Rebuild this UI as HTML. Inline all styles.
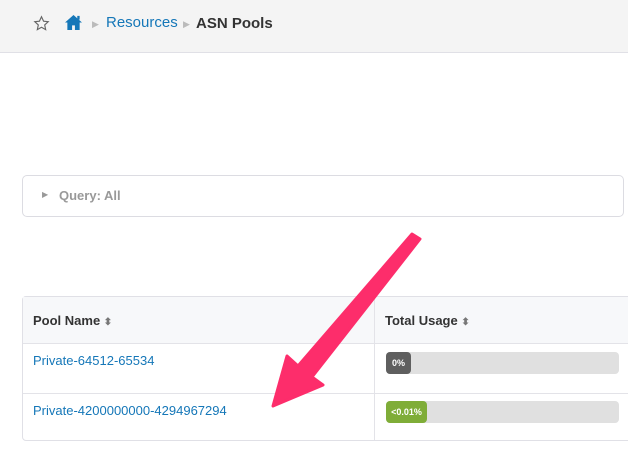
<!DOCTYPE html>
<html><head><style>
body{margin:0;width:628px;height:450px;background:#fff;font-family:"Liberation Sans",sans-serif;position:relative;overflow:hidden}
.hdr{position:absolute;left:0;top:0;width:628px;height:52px;background:#f4f4f4;border-bottom:1px solid #e0e0e6}
.bc{position:absolute;top:14px;font-size:15px}
.q{position:absolute;left:22px;top:175px;width:600px;height:40px;border:1px solid #dcdce2;border-radius:5px}
.tbl{position:absolute;left:22px;top:296px;width:620px;height:143px;border:1px solid #e0e0e6;border-radius:4px}
.th{position:absolute;top:0;height:46px;background:#f7f8fa;border-bottom:1px solid #e3e3e8;width:100%}
.cell{position:absolute;font-size:13px}
a{color:#1577b8;text-decoration:none}
.bar{position:absolute;left:363px;width:233px;height:22px;background:#e0e0e0;border-radius:4px}
.fill{position:absolute;left:0;top:0;height:22px;border-radius:4px;color:#fff;font-size:9px;font-weight:bold;line-height:22px;text-align:center}
</style></head><body>
<div class="hdr">
<svg style="position:absolute;left:33px;top:15px" width="17" height="17" viewBox="0 0 24 24"><path d="M12 2.5l2.9 6.2 6.6.7-5 4.6 1.4 6.6L12 17.3 6.1 20.6l1.4-6.6-5-4.6 6.6-.7z" fill="none" stroke="#666" stroke-width="1.6"/></svg>
<svg style="position:absolute;left:64px;top:14px" width="19" height="17" viewBox="0 0 20 18"><path d="M10 1L1 9h2.5v8h5v-5h3v5h5V9H19z" fill="#1577b8"/><rect x="14" y="2" width="2.5" height="4" fill="#1577b8"/></svg>
<span class="bc" style="left:92px;color:#bbb;font-size:9px;top:19px">▶</span>
<span class="bc" style="left:106px;color:#1577b8">Resources</span>
<span class="bc" style="left:183px;color:#bbb;font-size:9px;top:19px">▶</span>
<span class="bc" style="left:196px;color:#333;font-weight:bold;top:15px">ASN Pools</span>
</div>
<div class="q"><span style="position:absolute;left:19px;top:14px;font-size:8px;color:#999">▶</span><span style="position:absolute;left:36px;top:12px;font-size:13px;color:#999;font-weight:bold">Query: All</span></div>
<div class="tbl">
<div class="th"></div>
<div style="position:absolute;left:351px;top:0;width:1px;height:143px;background:#e3e3e8"></div>
<div style="position:absolute;left:0;top:96px;width:100%;height:1px;background:#e3e3e8"></div>
<div class="cell" style="left:10px;top:16px;font-weight:bold;color:#333">Pool Name <span style="color:#777;font-size:10px">⬍</span></div>
<div class="cell" style="left:362px;top:16px;font-weight:bold;color:#333">Total Usage <span style="color:#777;font-size:10px">⬍</span></div>
<div class="cell" style="left:10px;top:56px"><a>Private-64512-65534</a></div>
<div class="cell" style="left:10px;top:106px"><a>Private-4200000000-4294967294</a></div>
<div class="bar" style="top:55px"><div class="fill" style="width:25px;background:#5f5f5f">0%</div></div>
<div class="bar" style="top:104px"><div class="fill" style="width:41px;background:#7fad38">&lt;0.01%</div></div>
</div>
<svg style="position:absolute;left:0;top:0" width="628" height="450"><polygon points="412,234 420,239 312,377 323,385 273,406 287,356 298,366" fill="#fd2d6b" stroke="#fd2d6b" stroke-width="3" stroke-linejoin="round"/></svg>
</body></html>
